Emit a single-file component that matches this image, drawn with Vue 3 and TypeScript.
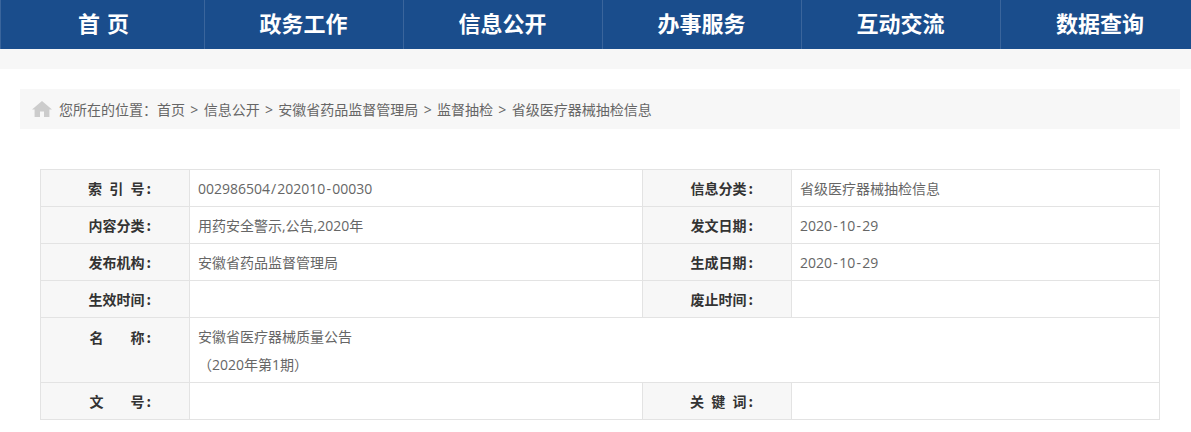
<template>
  <div class="page">
    <nav class="nav">
      <a v-for="item in navItems" :key="item" class="nav-item">{{ item }}</a>
    </nav>
    <div class="band"></div>
    <div class="crumbs">
      <svg class="home" viewBox="0 0 20 16" width="20" height="16">
        <path d="M10 0 L20 8.6 L17.4 8.6 L17.4 16 L12 16 L12 10.5 L8 10.5 L8 16 L2.6 16 L2.6 8.6 L0 8.6 Z" fill="#ccc" />
      </svg>
      <span class="crumb-text">您所在的位置：首页 &gt; 信息公开 &gt; 安徽省药品监督管理局 &gt; 监督抽检 &gt; 省级医疗器械抽检信息</span>
    </div>
    <table class="meta">
      <colgroup>
        <col class="c-label" />
        <col class="c-value" />
        <col class="c-label" />
        <col />
      </colgroup>
      <tbody>
        <tr>
          <th><span class="spread">索 引 号</span><span class="colon">:</span></th>
          <td>002986504<span class="slash">/</span>202010<span class="dash">-</span>00030</td>
          <th>信息分类<span class="colon">:</span></th>
          <td>省级医疗器械抽检信息</td>
        </tr>
        <tr>
          <th>内容分类<span class="colon">:</span></th>
          <td>用药安全警示,公告,2020年</td>
          <th>发文日期<span class="colon">:</span></th>
          <td>2020<span class="dash">-</span>10<span class="dash">-</span>29</td>
        </tr>
        <tr>
          <th>发布机构<span class="colon">:</span></th>
          <td>安徽省药品监督管理局</td>
          <th>生成日期<span class="colon">:</span></th>
          <td>2020<span class="dash">-</span>10<span class="dash">-</span>29</td>
        </tr>
        <tr>
          <th>生效时间<span class="colon">:</span></th>
          <td></td>
          <th>废止时间<span class="colon">:</span></th>
          <td></td>
        </tr>
        <tr class="tall">
          <th><span class="wide">名<i></i>称<span class="colon">:</span></span></th>
          <td colspan="3">
            <p>安徽省医疗器械质量公告</p>
            <p>（2020年第1期）</p>
          </td>
        </tr>
        <tr>
          <th><span class="wide">文<i></i>号<span class="colon">:</span></span></th>
          <td></td>
          <th><span class="spread">关 键 词</span><span class="colon">:</span></th>
          <td></td>
        </tr>
      </tbody>
    </table>
  </div>
</template>

<script setup lang="ts">
const navItems: string[] = ['首 页', '政务工作', '信息公开', '办事服务', '互动交流', '数据查询']
</script>

<style>
html,
body {
  background: #fff;
}
</style>

<style scoped>
.page {
  width: 1191px;
  height: 432px;
  overflow: hidden;
  font-family: "Open Sans", "Noto Sans CJK SC", sans-serif;
  font-size: 14px;
  color: #666;
}

.nav {
  display: flex;
  height: 49px;
  padding-left: 5px;
  border-left: 1px solid #3a659c;
  background: #1a4d8c;
}

.nav-item {
  width: 199px;
  flex: none;
  box-sizing: border-box;
  padding-right: 1px;
  border-right: 1px solid #3a659c;
  color: #fff;
  font-size: 22px;
  font-weight: 700;
  line-height: 45px;
  text-align: center;
  font-family: "Noto Sans CJK SC", sans-serif;
}

.nav-item:first-child {
  padding-right: 3px;
  word-spacing: 2px;
}

.nav-item:last-child {
  border-right: none;
}

.band {
  height: 20px;
  background: #f7f7f7;
}

.crumbs {
  display: flex;
  align-items: center;
  gap: 7px;
  height: 40px;
  margin: 20px 11px 40px 20px;
  padding-left: 12px;
  background: #f7f7f7;
}

.crumb-text {
  white-space: pre;
  word-spacing: 1.7px;
}

.meta {
  width: 1120px;
  margin-left: 40px;
  border-collapse: collapse;
  table-layout: fixed;
}

.c-label {
  width: 149px;
}

.c-value {
  width: 453px;
}

th,
td {
  height: 37px;
  box-sizing: border-box;
  padding: 0 8px;
  border: 1px solid #e3e3e3;
  vertical-align: middle;
}

th {
  padding: 0 38px 0 0;
  background: #f7f7f7;
  color: #333;
  font-weight: 700;
  text-align: right;
  font-family: "Noto Sans CJK SC", sans-serif;
}

.colon {
  margin-left: 2px;
}

.dash {
  margin: 0 1.3px;
}

.slash {
  margin: 0 1px;
}

.spread {
  word-spacing: 4px;
}

.wide {
  display: inline-flex;
}

.wide i {
  width: 27px;
}

.tall th,
.tall td {
  height: 65px;
  padding-top: 5px;
  padding-bottom: 0;
  vertical-align: top;
  line-height: 28px;
}

p {
  margin: 0;
  line-height: 28px;
}
</style>
